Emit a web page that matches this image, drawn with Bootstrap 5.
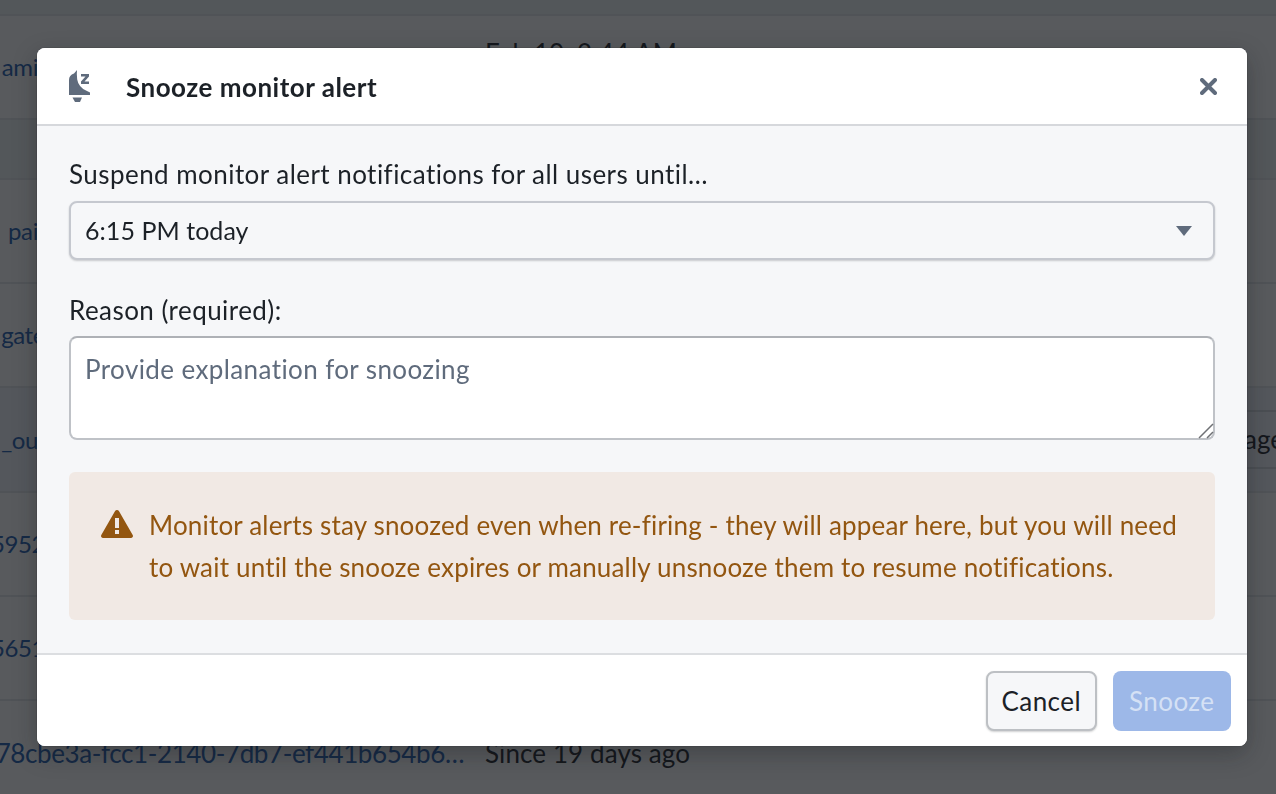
<!DOCTYPE html>
<html lang="en"><head><meta charset="utf-8"><title>Snooze monitor alert</title>
<link rel="stylesheet" href="https://cdn.jsdelivr.net/npm/bootstrap@5.3.0/dist/css/bootstrap.min.css">
<style>
html,body{height:100%;overflow:hidden}
body{font-family:"Lato","Noto Sans",sans-serif;font-size:26px;letter-spacing:.45px;color:#1c2127;background:#fff}
.bg-rows{height:794px;overflow:hidden;background:#fff}
.bg-row{display:flex;align-items:center;border-bottom:2px solid #e5e8eb;white-space:nowrap;overflow:hidden}
.r0{height:16px;background:#eff3f4}.r1{height:104px;background:#fff}.r2{height:60px;background:#eff3f4}.r3,.r4,.r6,.r7{height:104px}.r5{height:105px;background:#f1f3fa}.r8{height:104px;border:0}
.cell-id{width:464px;flex:none;color:#215db0;display:flex;justify-content:flex-end;overflow:hidden;letter-spacing:-.4px}
.clipped{padding-right:426px;font-size:24px}
.clipped.far{padding-right:419px}
.cell-time{padding-left:21px;letter-spacing:.1px}
.r1 .cell-time{align-self:flex-start;padding-top:18px}
.cell-tag{flex:none;align-self:stretch;display:flex;align-items:center;padding-left:316px;padding-right:60px;margin-top:22px;margin-bottom:22px;border-top:2px solid #d3d8de;border-bottom:2px solid #d3d8de;color:#1c2127;letter-spacing:0;margin-left:464px}
.scrim{position:fixed;inset:0;background:rgba(17,20,24,.7);z-index:10}
.snooze-dlg{position:fixed;left:37px;top:48px;width:1210px;height:698px;z-index:20;border:0;border-radius:8px;overflow:hidden;background:#f6f7f9;box-shadow:0 0 0 1px rgba(17,20,24,.1),0 8px 24px rgba(17,20,24,.3)}
.dlg-head{height:78px;background:#fff;border-bottom:2px solid #d6d8dc;padding:0 30px 0 32px;border-radius:0}
.dlg-title{font-size:26px;font-weight:700;letter-spacing:.5px;color:#1c2127;margin:0 0 0 35px;line-height:1;position:relative;top:1px}
.dlg-x{background:none;border:0;padding:0;line-height:0}
.dlg-body{padding:31px 32px 33px;flex:1}
.field-label{font-size:26px;line-height:34px;margin:0 0 10px;display:block}
.lbl-reason{line-height:36px;margin-bottom:8px}
.snz-select{height:59px;background-color:#f6f7f9;border:2px solid #c5c8cf;border-radius:8px;font-size:25px;letter-spacing:.05px;color:#1c2127;padding:0 14px;box-shadow:0 1px 2px rgba(17,20,24,.2);background-image:none;appearance:none}
.select-wrap{margin-bottom:32px}
.caret-ico{position:absolute;right:23px;top:25px;pointer-events:none}
.area-wrap{margin-bottom:32px}
.snz-area{height:104px;border:2px solid #bfc2c7;border-top-color:#aeb1b6;border-radius:8px;font-size:26px;letter-spacing:.4px;padding:13px 14px;color:#1c2127;resize:none;line-height:36px}
.snz-area::placeholder{color:#5f6b7c;opacity:1}
.grip-ico{position:absolute;right:1px;bottom:1px;pointer-events:none}
.snz-note{background:#f1e9e4;color:#935610;border:0;border-radius:6px;padding:32px 30px 32px 32px;margin:0;line-height:42px;font-size:26px;letter-spacing:.18px;gap:16px;height:148px}
.snz-note svg{flex:none;margin-top:6px}
.dlg-foot{height:94px;background:#fff;border-top:2px solid #dcdee1;padding:16px;gap:16px;border-radius:0}
.dlg-foot .btn{margin:0;height:60px;font-size:26px;letter-spacing:.45px;border-radius:8px}
.dlg-foot .btn-cancel{background:#f6f7f9;border:2px solid #bdc0c4;color:#1c2127;box-shadow:0 1px 2px rgba(17,20,24,.2);padding:0 13.500px}
.dlg-foot .btn-snz,.dlg-foot .btn-snz:disabled{background:#9db8e8;border:0;color:#d5e1f5;opacity:1;padding:0 16.500px}
</style></head><body>
<div class="bg-rows">
<div class="bg-row r0"></div>
<div class="bg-row r1"><div class="cell-id clipped"><span>ami</span></div><div class="cell-time">Feb 10, 2:44 AM</div></div>
<div class="bg-row r2"></div>
<div class="bg-row r3"><div class="cell-id clipped"><span>pai</span></div></div>
<div class="bg-row r4"><div class="cell-id clipped far"><span>gate</span></div></div>
<div class="bg-row r5"><div class="cell-id clipped"><span>_ou</span></div><div class="cell-tag">age</div></div>
<div class="bg-row r6"><div class="cell-id clipped far"><span>5952</span></div></div>
<div class="bg-row r7"><div class="cell-id clipped far"><span>5651</span></div></div>
<div class="bg-row r8"><div class="cell-id"><span>978cbe3a-fcc1-2140-7db7-ef441b654b6…</span></div><div class="cell-time">Since 19 days ago</div></div>
</div>
<div class="scrim"></div>
<div class="modal-content d-flex flex-column snooze-dlg" role="dialog">
<div class="modal-header dlg-head">
<svg width="22" height="33" viewBox="0 0 22 33" fill="#5f6b7c"><path d="M8 0 5 3.500Q0 5 0 10V25H21V22.500L17 20.500Q9.500 17 8.200 9.500 7.500 4 8 0Z"/><path d="M3.500 27.500H13L11 32H6Z"/><path d="M12 4H20V6.500L15.500 11.500H20V14H12V11.500L16.500 6.500H12Z"/></svg>
<h1 class="dlg-title">Snooze monitor alert</h1>
<button type="button" class="dlg-x ms-auto" aria-label="Close"><svg width="17" height="17" viewBox="0 0 17 17"><path d="M2 2 15 15M15 2 2 15" stroke="#5f6b7c" stroke-width="4" stroke-linecap="round"/></svg></button>
</div>
<div class="modal-body dlg-body">
<label class="field-label">Suspend monitor alert notifications for all users until…</label>
<div class="position-relative select-wrap">
<select class="form-select snz-select"><option>6:15 PM today</option></select>
<svg class="caret-ico" width="16" height="10" viewBox="0 0 16 10"><path d="M0 0H16L8 10Z" fill="#5f6b7c"/></svg>
</div>
<label class="field-label lbl-reason">Reason (required):</label>
<div class="position-relative area-wrap">
<textarea class="form-control snz-area" placeholder="Provide explanation for snoozing"></textarea>
<svg class="grip-ico" width="16" height="16" viewBox="0 0 16 16"><path d="M1 15 15 1M9 15 15 9" stroke="#6f7175" stroke-width="1.500" fill="none"/></svg>
</div>
<div class="alert d-flex snz-note">
<svg width="32" height="28" viewBox="0 0 32 28"><path fill-rule="evenodd" fill="#935610" d="M16 0c.8 0 1.500.4 1.900 1.100L31.700 25c.7 1.300 0 3-1.700 3H2c-1.700 0-2.400-1.700-1.700-3L14.100 1.100C14.500.4 15.200 0 16 0ZM14 8v10h4V8ZM14 20v4h4v-4Z"/></svg>
<div>Monitor alerts stay snoozed even when re-firing - they will appear here, but you will need to wait until the snooze expires or manually unsnooze them to resume notifications.</div>
</div>
</div>
<div class="modal-footer dlg-foot">
<button type="button" class="btn btn-cancel">Cancel</button>
<button type="button" class="btn btn-snz" disabled>Snooze</button>
</div>
</div>
</body></html>
